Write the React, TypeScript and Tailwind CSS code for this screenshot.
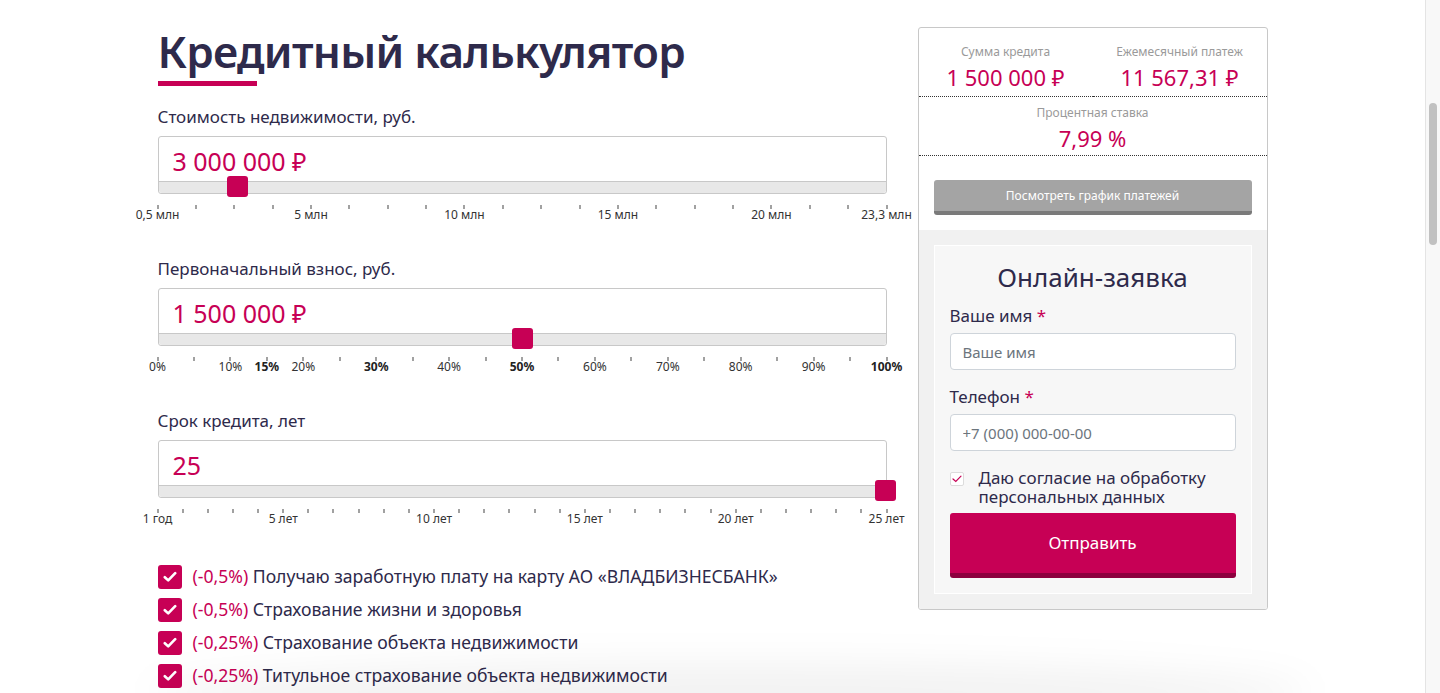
import React from "react";

type Tick = { label: string; bold?: boolean };

type SliderProps = {
  label: string;
  value: string;
  pct: number;
  count: number;
  labels: Record<number, Tick>;
};

function Scale({ count, labels }: { count: number; labels: Record<number, Tick> }) {
  const items = Array.from({ length: count }, (_, i) => i);
  return (
    <div className="relative mt-[11px] h-[24px] w-[729px]">
      {items.map((i) => {
        const left = `${(i / (count - 1)) * 100}%`;
        const t = labels[i];
        return (
          <React.Fragment key={i}>
            <span
              className="absolute top-0 h-[4px] w-px -translate-x-1/2 bg-[#444]"
              style={{ left }}
            />
            {t && (
              <span
                className={`absolute top-[2px] -translate-x-1/2 whitespace-nowrap text-[12px] leading-[16px] ${
                  t.bold ? "font-bold text-[#222]" : "text-[#333]"
                }`}
                style={{ left }}
              >
                {t.label}
              </span>
            )}
          </React.Fragment>
        );
      })}
    </div>
  );
}

function Slider({ label, value, pct, count, labels }: SliderProps) {
  return (
    <div>
      <p className="text-[17px] leading-[24px] text-[#2e2a4b]">{label}</p>
      <div className="mt-[7px] w-[729px] rounded-[3px] border border-[#c8c8c8]">
        <div className="flex h-[44px] items-center px-[14px] pt-[5px] text-[25px] text-[#c70055]">
          {value}
        </div>
        <div className="relative h-[12px] rounded-b-[3px] border-t border-[#c8c8c8] bg-[#e8e8e8]">
          <span
            className="absolute top-[-6px] h-[21px] w-[21px] rounded-[3px] bg-[#c70055]"
            style={{ left: `calc(${pct}% - 10.5px)` }}
          />
        </div>
      </div>
      <Scale count={count} labels={labels} />
    </div>
  );
}

function CheckMark() {
  return (
    <span className="flex h-[24px] w-[24px] shrink-0 items-center justify-center rounded-[3px] bg-[#c70055]">
      <svg width="14" height="12" viewBox="0 0 14 12" fill="none">
        <path
          d="M1.8 6.2L5.2 9.4L12.2 2.2"
          stroke="white"
          strokeWidth="2.6"
          strokeLinecap="round"
          strokeLinejoin="round"
        />
      </svg>
    </span>
  );
}

const options = [
  ["(-0,5%)", "Получаю заработную плату на карту АО «ВЛАДБИЗНЕСБАНК»"],
  ["(-0,5%)", "Страхование жизни и здоровья"],
  ["(-0,25%)", "Страхование объекта недвижимости"],
  ["(-0,25%)", "Титульное страхование объекта недвижимости"],
];

function Stat({ title, value, className }: { title: string; value: string; className?: string }) {
  return (
    <div className={`border-b border-dotted border-[#333] text-center ${className ?? ""}`}>
      <p className="text-[12px] leading-[16px] text-[#9a9a9a]">{title}</p>
      <p className="mt-[4px] text-[22px] leading-[26px] text-[#c70055]">{value}</p>
    </div>
  );
}

function ApplicationForm() {
  return (
    <div className="border border-white bg-[#f7f7f7] px-[15px] pt-[15px] pb-[15px]">
      <h2 className="text-center text-[26px] leading-[32px] text-[#2e2a4b]">Онлайн-заявка</h2>

      <label className="mt-[12px] block text-[17px] leading-[22px] text-[#2e2a4b]">
        Ваше имя <span className="text-[#c70055]">*</span>
      </label>
      <input
        className="mt-[6px] h-[37px] w-full rounded-[4px] border border-[#ced4da] bg-white px-[12px] text-[15px] text-[#333] placeholder:text-[#6c757d] outline-none"
        placeholder="Ваше имя"
      />

      <label className="mt-[16px] block text-[17px] leading-[22px] text-[#2e2a4b]">
        Телефон <span className="text-[#c70055]">*</span>
      </label>
      <input
        className="mt-[6px] h-[37px] w-full rounded-[4px] border border-[#ced4da] bg-white px-[12px] text-[15px] text-[#333] placeholder:text-[#6c757d] outline-none"
        placeholder="+7 (000) 000-00-00"
      />

      <div className="mt-[17px] flex gap-[15px]">
        <span className="mt-[4px] flex h-[14px] w-[14px] shrink-0 items-center justify-center rounded-[2px] border border-[#dcdcdc] bg-white">
          <svg width="10" height="8" viewBox="0 0 10 8" fill="none">
            <path d="M1 4L3.8 6.5L9 1.2" stroke="#c70055" strokeWidth="1.2" strokeLinecap="round" />
          </svg>
        </span>
        <div className="text-[17px] text-[#2e2a4b]">
          <p className="h-[19px] leading-[19px]">Даю согласие на обработку</p>
          <p className="h-[19px] leading-[19px]">персональных данных</p>
        </div>
      </div>

      <button className="mt-[7px] h-[65px] w-full rounded-[3px] border-b-[5px] border-[#8d003e] bg-[#c70055] text-[17px] text-white">
        Отправить
      </button>
    </div>
  );
}

export default function App() {
  return (
    <div className="relative flex h-[693px] w-full overflow-hidden bg-white font-['Noto_Sans',sans-serif]">
      <main className="min-w-0 flex-1">
        <div className="mx-auto flex w-[1110px] gap-[31px] pt-[25px]">
          <section className="w-[729px]">
            <h1 className="text-[44px] font-semibold leading-[52px] tracking-[-0.7px] text-[#2e2a4b]">
              Кредитный калькулятор
            </h1>
            <div className="mt-[4px] h-[5px] w-[99px] bg-[#c70055]" />

            <div className="mt-[19px]">
              <Slider
                label="Стоимость недвижимости, руб."
                value="3 000 000 ₽"
                pct={(79 / 727) * 100}
                count={20}
                labels={{
                  0: { label: "0,5 млн" },
                  4: { label: "5 млн" },
                  8: { label: "10 млн" },
                  12: { label: "15 млн" },
                  16: { label: "20 млн" },
                  19: { label: "23,3 млн" },
                }}
              />
            </div>

            <div className="mt-[28px]">
              <Slider
                label="Первоначальный взнос, руб."
                value="1 500 000 ₽"
                pct={50}
                count={21}
                labels={{
                  0: { label: "0%" },
                  2: { label: "10%" },
                  3: { label: "15%", bold: true },
                  4: { label: "20%" },
                  6: { label: "30%", bold: true },
                  8: { label: "40%" },
                  10: { label: "50%", bold: true },
                  12: { label: "60%" },
                  14: { label: "70%" },
                  16: { label: "80%" },
                  18: { label: "90%" },
                  20: { label: "100%", bold: true },
                }}
              />
            </div>

            <div className="mt-[28px]">
              <Slider
                label="Срок кредита, лет"
                value="25"
                pct={100}
                count={30}
                labels={{
                  0: { label: "1 год" },
                  5: { label: "5 лет" },
                  11: { label: "10 лет" },
                  17: { label: "15 лет" },
                  23: { label: "20 лет" },
                  29: { label: "25 лет" },
                }}
              />
            </div>

            <ul className="mt-[27px] flex flex-col">
              {options.map(([pct, text], i) => (
                <li key={i} className="flex h-[33px] items-center gap-[11px]">
                  <CheckMark />
                  <span className="text-[17.6px] text-[#2e2a4b]">
                    <span className="text-[#c70055]">{pct}</span> {text}
                  </span>
                </li>
              ))}
            </ul>
          </section>

          <aside className="mt-[2px] h-fit w-[350px] overflow-hidden rounded-[3px] border border-[#c8c8c8]">
            <div className="grid grid-cols-2">
              <Stat title="Сумма кредита" value="1 500 000 ₽" className="pt-[16px] pb-[6px]" />
              <Stat title="Ежемесячный платеж" value="11 567,31 ₽" className="pt-[16px] pb-[6px]" />
            </div>
            <Stat title="Процентная ставка" value="7,99 %" className="pt-[8px] pb-[4px]" />

            <div className="px-[15px] pt-[24px] pb-[15px]">
              <button className="h-[35px] w-full rounded-[3px] border-b-[4px] border-[#7a7a7a] bg-[#a4a4a4] text-[12px] text-white">
                Посмотреть график платежей
              </button>
            </div>

            <div className="bg-[#f1f1f1] p-[15px]">
              <ApplicationForm />
            </div>
          </aside>
        </div>
      </main>

      <div className="flex w-[15px] shrink-0 justify-center border-l border-[#e4e4e4] bg-[#f8f8f8] pt-[103px]">
        <div className="h-[142px] w-[8px] rounded-full bg-[#c1c1c1]" />
      </div>

      <div className="pointer-events-none absolute bottom-[-30px] left-[150px] h-[60px] w-[1160px] rounded-[50%] bg-[#000]/[0.05] blur-[18px]" />
    </div>
  );
}
